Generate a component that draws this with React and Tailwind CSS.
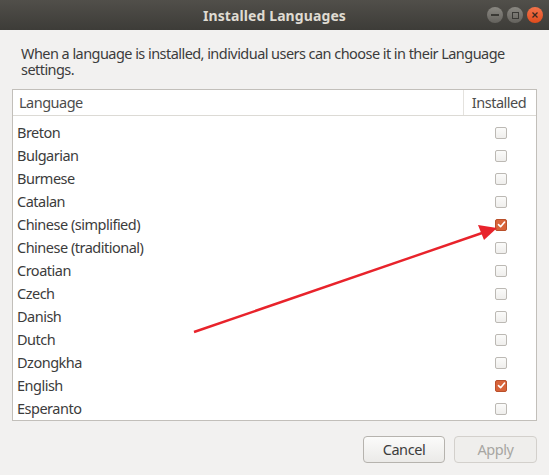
import React from "react";

const langs = [
  ["Breton", false],
  ["Bulgarian", false],
  ["Burmese", false],
  ["Catalan", false],
  ["Chinese (simplified)", true],
  ["Chinese (traditional)", false],
  ["Croatian", false],
  ["Czech", false],
  ["Danish", false],
  ["Dutch", false],
  ["Dzongkha", false],
  ["English", true],
  ["Esperanto", false],
];

function Check({ on }) {
  if (on) {
    return (
      <div className="w-[12px] h-[12px] rounded-[2px] bg-[#d8643a] border border-[#b9502b] flex items-center justify-center">
        <svg width="9" height="9" viewBox="0 0 9 9">
          <path d="M1.5 4.6 L3.6 6.7 L7.6 2" stroke="white" strokeWidth="1.6" fill="none" strokeLinecap="round" strokeLinejoin="round" />
        </svg>
      </div>
    );
  }
  return <div className="w-[12px] h-[12px] rounded-[2px] bg-gradient-to-b from-[#fbfbfa] to-[#efeeec] border border-[#bcb9b4]" />;
}

export default function App() {
  return (
    <div className="w-[549px] h-[475px] bg-[#f2f1f0] relative overflow-hidden" style={{ fontFamily: '"Noto Sans", "Open Sans", sans-serif' }}>
      <div className="h-[30px] bg-gradient-to-b from-[#514f4a] to-[#3d3c38] flex items-center justify-center relative">
        <span className="text-[14px] font-bold text-[#dfdbd2] tracking-[0.1px]">Installed Languages</span>
        <div className="absolute right-[6px] top-[7px] flex gap-[4px]">
          <div className="w-[16px] h-[16px] rounded-full bg-gradient-to-b from-[#8a8882] to-[#64625d] flex items-center justify-center">
            <div className="w-[8px] h-[1.5px] bg-[#3a3935]" />
          </div>
          <div className="w-[16px] h-[16px] rounded-full bg-gradient-to-b from-[#8a8882] to-[#64625d] flex items-center justify-center">
            <div className="w-[7px] h-[7px] border border-[#3a3935]" />
          </div>
          <div className="w-[16px] h-[16px] rounded-full bg-gradient-to-b from-[#f3734a] to-[#df4b1a] flex items-center justify-center">
            <svg width="8" height="8" viewBox="0 0 8 8"><path d="M1.5 1.5 L6.5 6.5 M6.5 1.5 L1.5 6.5" stroke="#3a2a22" strokeWidth="1.3" /></svg>
          </div>
        </div>
      </div>
      <div className="pl-[21px] pr-[20px] pt-[15px] text-[14.5px] tracking-[-0.55px] leading-[16px] text-[#3c3c3c]">
        When a language is installed, individual users can choose it in their Language settings.
      </div>
      <div className="mx-[12px] mt-[12px] h-[332px] bg-white border border-[#c2bfba] flex flex-col">
        <div className="h-[27px] flex border-b border-[#dcdad5] text-[14.5px] tracking-[-0.5px] text-[#4c4c4c]">
          <div className="flex-1 flex items-center pl-[6px] border-r border-[#e4e2de]">Language</div>
          <div className="w-[72px] flex items-center justify-center pr-[2px]">Installed</div>
        </div>
        <div className="pt-[5px]">
          {langs.map(([n, on]) => (
            <div key={n} className="h-[23px] flex items-center text-[14.5px] tracking-[-0.5px] text-[#3c3c3c]">
              <div className="flex-1 pl-[4px]">{n}</div>
              <div className="w-[72px] flex justify-center pl-[2px]"><Check on={on} /></div>
            </div>
          ))}
        </div>
      </div>
      <div className="flex justify-end gap-[9px] pr-[12px] mt-[15px]">
        <button className="w-[82px] h-[27px] rounded-[4px] border border-[#b6b3ae] bg-gradient-to-b from-[#fbfbfa] to-[#ebeae8] text-[14.5px] tracking-[-0.4px] text-[#3c3c3c]">Cancel</button>
        <button className="w-[83px] h-[27px] rounded-[4px] border border-[#d3d0cc] bg-[#efeeec] text-[14.5px] tracking-[-0.4px] text-[#a7a6a2]">Apply</button>
      </div>
      <svg className="absolute left-0 top-0 pointer-events-none" width="549" height="475">
        <line x1="194" y1="332" x2="485" y2="232" stroke="#e8232b" strokeWidth="2.4" />
        <polygon points="497,228 478,225 484,240" fill="#e8232b" />
      </svg>
    </div>
  );
}
